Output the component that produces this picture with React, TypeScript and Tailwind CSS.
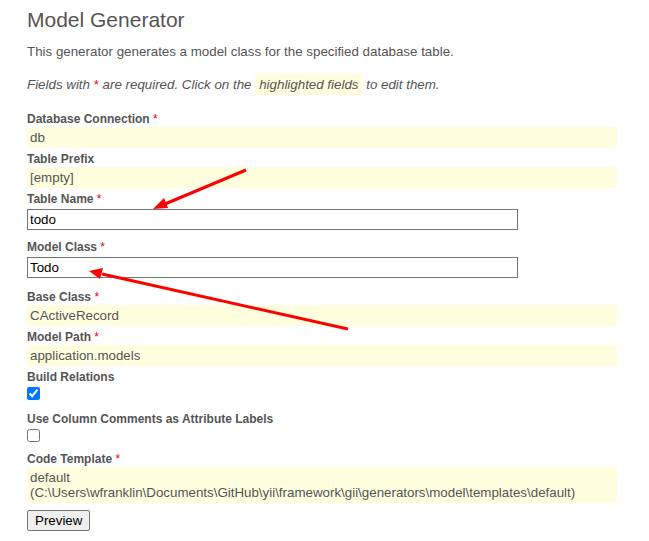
import React from "react";

interface FieldProps {
    label: string;
    required?: boolean;
    children: React.ReactNode;
}

const Field: React.FC<FieldProps> = ({ label, required, children }) => {
    return (
        <div className="flex flex-col">
            <label className="text-[12px] leading-[15px] font-bold text-[#555]">
                {label}
                {required ? <span className="text-[#e00] font-normal"> *</span> : null}
            </label>
            {children}
        </div>
    );
};

const Sticky: React.FC<{ children: React.ReactNode }> = ({ children }) => (
    <div className="w-[590px] min-h-[21px] bg-[#ffffe0] px-[3px] py-[3px] text-[13.33px] leading-[15px] text-[#555] mb-[4px]">
        {children}
    </div>
);

const TextBox: React.FC<{ value: string; last?: boolean }> = ({ value, last }) => (
    <input
        type="text"
        defaultValue={value}
        className={
            last
                ? "w-[491px] h-[21px] mt-[2px] mb-[12px] border border-[#767676] px-[2px] text-[13.33px] text-black outline-none"
                : "w-[491px] h-[21px] mt-[2px] mb-[10px] border border-[#767676] px-[2px] text-[13.33px] text-black outline-none"
        }
    />
);

export default function App() {
    return (
        <div className="relative w-[649px] h-[541px] bg-white px-[27px] pt-[7px] font-['Liberation_Sans',Arial,sans-serif] text-[#555]">
            <h1 className="text-[21px] leading-[25px] text-[#555] mb-[12px]">Model Generator</h1>
            <p className="text-[13.33px] leading-[16px] mb-[17px]">
                This generator generates a model class for the specified database table.
            </p>
            <p className="text-[13.33px] italic leading-[16px] mb-[19px]">
                Fields with <span className="text-[#e00] not-italic">*</span> are required. Click on the{" "}
                <span className="bg-[#ffffe0] px-[4px] py-[3px]">highlighted fields</span> to edit them.
            </p>

            <Field label="Database Connection" required>
                <Sticky>db</Sticky>
            </Field>
            <Field label="Table Prefix">
                <Sticky>[empty]</Sticky>
            </Field>
            <Field label="Table Name" required>
                <TextBox value="todo" />
            </Field>
            <Field label="Model Class" required>
                <TextBox value="Todo" last />
            </Field>
            <Field label="Base Class" required>
                <Sticky>CActiveRecord</Sticky>
            </Field>
            <Field label="Model Path" required>
                <Sticky>application.models</Sticky>
            </Field>
            <Field label="Build Relations">
                <input type="checkbox" defaultChecked className="w-[13px] h-[13px] mt-[2px] mb-[12px] accent-[#0075ff]" />
            </Field>
            <Field label="Use Column Comments as Attribute Labels">
                <input type="checkbox" className="w-[13px] h-[13px] mt-[2px] mb-[10px]" />
            </Field>
            <Field label="Code Template" required>
                <Sticky>
                    default
                    <br />
                    (C:\Users\wfranklin\Documents\GitHub\yii\framework\gii\generators\model\templates\default)
                </Sticky>
            </Field>
            <button className="self-start mt-[3px] h-[21px] px-[7px] border border-[#767676] rounded-[2px] bg-[#efefef] text-[13.33px] text-black">
                Preview
            </button>

            {/* annotation arrows drawn over the form */}
            <svg className="absolute left-0 top-0 pointer-events-none" width="649" height="541">
                <line x1="246" y1="170" x2="165" y2="204" stroke="#f00" strokeWidth="3" />
                <polygon points="153,209 164,198 168,208" fill="#f00" />
                <line x1="348" y1="329" x2="102" y2="274" stroke="#f00" strokeWidth="3" />
                <polygon points="89,271 103,268 100,279" fill="#f00" />
            </svg>
        </div>
    );
}
